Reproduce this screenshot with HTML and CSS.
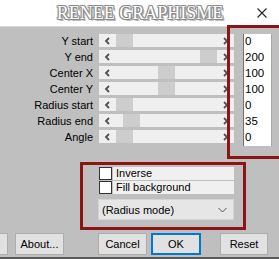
FILE: index.html
```html
<!DOCTYPE html>
<html>
<head>
<meta charset="utf-8">
<link rel="stylesheet" href="styles.css">
</head>
<body>
<div class="window">
  <header class="titlebar">
    <span class="title">RENEE GRAPHISME</span>
    <svg class="close" width="10" height="10" viewBox="0 0 10 10"><path d="M0.5 0.5L9.5 9.5M9.5 0.5L0.5 9.5" stroke="#222" stroke-width="1.1" fill="none"/></svg>
  </header>
  <main class="content">
    <section class="params">
      <div class="row">
        <span class="lbl">Y start</span>
        <div class="track"><span class="btn"><svg width="7" height="8" viewBox="0 0 7 8"><path d="M5 1L2 4L5 7" stroke="#505050" stroke-width="1.8" fill="none"/></svg></span><span class="rail"><span class="thumb" style="margin-left:0px"></span></span><span class="btn"><svg width="7" height="8" viewBox="0 0 7 8"><path d="M2 1L5 4L2 7" stroke="#505050" stroke-width="1.8" fill="none"/></svg></span></div>
        <span class="num">0</span>
      </div>
      <div class="row">
        <span class="lbl">Y end</span>
        <div class="track"><span class="btn"><svg width="7" height="8" viewBox="0 0 7 8"><path d="M5 1L2 4L5 7" stroke="#505050" stroke-width="1.8" fill="none"/></svg></span><span class="rail"><span class="thumb" style="margin-left:84px"></span></span><span class="btn"><svg width="7" height="8" viewBox="0 0 7 8"><path d="M2 1L5 4L2 7" stroke="#505050" stroke-width="1.8" fill="none"/></svg></span></div>
        <span class="num">200</span>
      </div>
      <div class="row">
        <span class="lbl">Center X</span>
        <div class="track"><span class="btn"><svg width="7" height="8" viewBox="0 0 7 8"><path d="M5 1L2 4L5 7" stroke="#505050" stroke-width="1.8" fill="none"/></svg></span><span class="rail"><span class="thumb" style="margin-left:42px"></span></span><span class="btn"><svg width="7" height="8" viewBox="0 0 7 8"><path d="M2 1L5 4L2 7" stroke="#505050" stroke-width="1.8" fill="none"/></svg></span></div>
        <span class="num">100</span>
      </div>
      <div class="row">
        <span class="lbl">Center Y</span>
        <div class="track"><span class="btn"><svg width="7" height="8" viewBox="0 0 7 8"><path d="M5 1L2 4L5 7" stroke="#505050" stroke-width="1.8" fill="none"/></svg></span><span class="rail"><span class="thumb" style="margin-left:42px"></span></span><span class="btn"><svg width="7" height="8" viewBox="0 0 7 8"><path d="M2 1L5 4L2 7" stroke="#505050" stroke-width="1.8" fill="none"/></svg></span></div>
        <span class="num">100</span>
      </div>
      <div class="row">
        <span class="lbl">Radius start</span>
        <div class="track"><span class="btn"><svg width="7" height="8" viewBox="0 0 7 8"><path d="M5 1L2 4L5 7" stroke="#505050" stroke-width="1.8" fill="none"/></svg></span><span class="rail"><span class="thumb" style="margin-left:0px"></span></span><span class="btn"><svg width="7" height="8" viewBox="0 0 7 8"><path d="M2 1L5 4L2 7" stroke="#505050" stroke-width="1.8" fill="none"/></svg></span></div>
        <span class="num">0</span>
      </div>
      <div class="row">
        <span class="lbl">Radius end</span>
        <div class="track"><span class="btn"><svg width="7" height="8" viewBox="0 0 7 8"><path d="M5 1L2 4L5 7" stroke="#505050" stroke-width="1.8" fill="none"/></svg></span><span class="rail"><span class="thumb" style="margin-left:7px"></span></span><span class="btn"><svg width="7" height="8" viewBox="0 0 7 8"><path d="M2 1L5 4L2 7" stroke="#505050" stroke-width="1.8" fill="none"/></svg></span></div>
        <span class="num">35</span>
      </div>
      <div class="row">
        <span class="lbl">Angle</span>
        <div class="track"><span class="btn"><svg width="7" height="8" viewBox="0 0 7 8"><path d="M5 1L2 4L5 7" stroke="#505050" stroke-width="1.8" fill="none"/></svg></span><span class="rail"><span class="thumb" style="margin-left:0px"></span></span><span class="btn"><svg width="7" height="8" viewBox="0 0 7 8"><path d="M2 1L5 4L2 7" stroke="#505050" stroke-width="1.8" fill="none"/></svg></span></div>
        <span class="num">0</span>
      </div>
    </section>
    <section class="options">
      <div class="check"><span class="box"></span><span class="ctext">Inverse</span></div>
      <div class="check"><span class="box"></span><span class="ctext">Fill background</span></div>
      <div class="select"><span>(Radius mode)</span><svg width="9" height="6" viewBox="0 0 9 6"><path d="M0.5 1L4.5 5L8.5 1" stroke="#555" stroke-width="1" fill="none"/></svg></div>
    </section>
    <footer class="buttons">
      <span class="button cut"></span>
      <span class="button">About...</span>
      <span class="spacer"></span>
      <span class="button">Cancel</span>
      <span class="button ok">OK</span>
      <span class="button reset">Reset</span>
    </footer>
  </main>
  <div class="frame frame-values"></div>
  <div class="frame frame-options"></div>
</div>
</body>
</html>
```
FILE: styles.css
```css
* { box-sizing: border-box; }
html, body { margin: 0; padding: 0; }
body {
  width: 279px;
  height: 259px;
  overflow: hidden;
  font-family: "Liberation Sans", Arial, sans-serif;
  font-size: 11px;
  color: #000;
  background: #bfbfbf;
}
.window {
  position: relative;
  width: 279px;
  height: 259px;
  display: flex;
  flex-direction: column;
  background: #bfbfbf;
  border-bottom: 2px solid #5a5a5a;
}
.titlebar {
  height: 27px;
  flex: none;
  background: #fff;
  border-bottom: 1px solid #d8d8d8;
  display: flex;
  align-items: center;
  justify-content: center;
  position: relative;
}
.title {
  font-family: "Liberation Serif", "Times New Roman", serif;
  font-weight: normal;
  font-size: 18px;
  color: #fff;
  margin-top: 1px;
  margin-left: 1px;
  text-shadow: -1px 0 #8a8a8a, 1px 0 #8a8a8a, 0 -1px #8a8a8a, 0 1px #8a8a8a,
               -1px -1px #a0a0a0, 1px -1px #a0a0a0, -1px 1px #a0a0a0, 1px 1px #8a8a8a,
               2px 2px #b4b4b4;
}
.close {
  position: absolute;
  right: 12px;
  top: 8px;
}
.content {
  flex: 1;
  display: flex;
  flex-direction: column;
  padding-top: 7px;
}
.params {
  display: flex;
  flex-direction: column;
}
.row {
  display: flex;
  height: 16px;
  align-items: flex-start;
}
.lbl {
  width: 93px;
  text-align: right;
  line-height: 13px;
  padding-top: 1px;
}
.track {
  margin-left: 6px;
  width: 135px;
  height: 13px;
  background: #efefef;
  display: flex;
}
.btn {
  width: 17px;
  height: 13px;
  display: flex;
  align-items: center;
  justify-content: center;
}
.rail {
  flex: 1;
  display: flex;
}
.thumb {
  width: 17px;
  height: 13px;
  background: #cdcdcd;
}
.num {
  margin-left: 9px;
  width: 29px;
  height: 16px;
  background: #fff;
  border-left: 1px solid #707070;
  border-right: 1px solid #a8a8a8;
  padding-left: 1px;
  line-height: 15px;
  font-size: 11.5px;
}
.options {
  margin-top: 20px;
  margin-left: 98px;
  width: 136px;
  display: flex;
  flex-direction: column;
}
.check {
  display: flex;
  height: 14px;
  align-items: center;
  padding-left: 1px;
}
.box {
  width: 13px;
  height: 13px;
  background: #fff;
  border: 1px solid #333;
  flex: none;
}
.ctext {
  margin-left: 1px;
  flex: 1;
  height: 13px;
  background: #f0f0f0;
  line-height: 13px;
  padding-left: 3px;
}
.select {
  margin-top: 5px;
  height: 21px;
  background: #e6e6e6;
  border: 1px solid #d4d4d4;
  display: flex;
  align-items: center;
  justify-content: space-between;
  padding: 0 6px 0 3px;
}
.buttons {
  margin-top: 13px;
  display: flex;
  height: 22px;
}
.button {
  width: 49px;
  height: 22px;
  flex: none;
  background: #e1e1e1;
  border: 1px solid #adadad;
  display: flex;
  align-items: center;
  justify-content: center;
  margin-right: 4px;
}
.cut { margin-left: -41px; margin-right: 7px; }
.spacer { width: 30px; }
.ok { border: 2px solid #0078d7; width: 50px; }
.reset { margin-left: 15px; width: 48px; }
.frame {
  position: absolute;
  border: 3px solid #8b1414;
}
.frame-values {
  left: 227px;
  top: 25px;
  width: 55px;
  height: 134px;
}
.frame-options {
  left: 80px;
  top: 162px;
  width: 166px;
  height: 68px;
}
```
